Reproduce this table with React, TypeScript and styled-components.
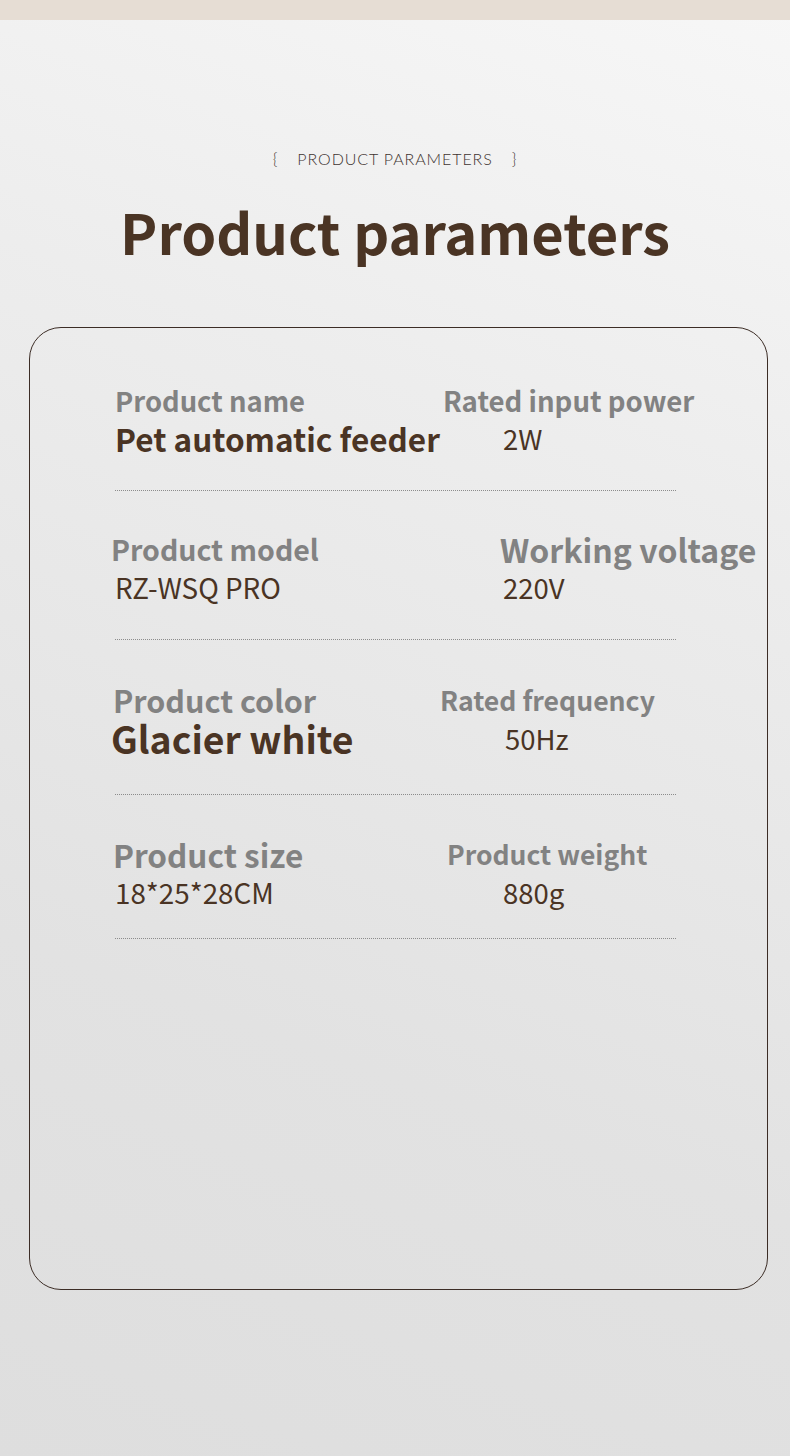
import React from "react"
import styled, { createGlobalStyle } from "styled-components"

const GlobalStyle = createGlobalStyle`
  html, body {
    margin: 0;
    padding: 0;
  }
  body {
    font-family: "Noto Sans CJK SC", "Noto Sans", sans-serif;
  }
`

type Spec = {
  label: string
  value: string
  labelSize: number
  valueSize: number
  valueBold?: boolean
  labelShift: number
  valueShift: number
}

type RowSpec = {
  height: number
  pad: number
  gap: number
  cells: [Spec, Spec]
}

const rows: RowSpec[] = [
  {
    height: 163,
    pad: 53,
    gap: 0,
    cells: [
      { label: "Product name", value: "Pet automatic feeder", labelSize: 27.4, valueSize: 31.5, valueBold: true, labelShift: 0, valueShift: 0 },
      { label: "Rated input power", value: "2W", labelSize: 27.6, valueSize: 27.5, labelShift: 3, valueShift: 63 },
    ],
  },
  {
    height: 149,
    pad: 39,
    gap: -2,
    cells: [
      { label: "Product model", value: "RZ-WSQ PRO", labelSize: 28.5, valueSize: 27.8, labelShift: -4, valueShift: 0 },
      { label: "Working voltage", value: "220V", labelSize: 32, valueSize: 27.5, labelShift: 60, valueShift: 63 },
    ],
  },
  {
    height: 155,
    pad: 41,
    gap: 0,
    cells: [
      { label: "Product color", value: "Glacier white", labelSize: 30.5, valueSize: 37.4, valueBold: true, labelShift: -2, valueShift: -4 },
      { label: "Rated frequency", value: "50Hz", labelSize: 26.6, valueSize: 27.5, labelShift: 0, valueShift: 65 },
    ],
  },
  {
    height: 144,
    pad: 40,
    gap: -3,
    cells: [
      { label: "Product size", value: "18*25*28CM", labelSize: 31.5, valueSize: 27.8, labelShift: -2, valueShift: 0 },
      { label: "Product weight", value: "880g", labelSize: 26.5, valueSize: 27.5, labelShift: 7, valueShift: 63 },
    ],
  },
]

export default function App() {
  return (
    <>
      <GlobalStyle />
      <Page>
        <TopBar />
        <Eyebrow>
          <span>{"{"}</span>
          <span>PRODUCT PARAMETERS</span>
          <span>{"}"}</span>
        </Eyebrow>
        <Title>Product parameters</Title>
        <Card>
          {rows.map((row, i) => (
            <Row key={i} $height={row.height} $pad={row.pad}>
              {row.cells.map((c) => (
                <Cell key={c.label} $gap={row.gap}>
                  <Label $size={c.labelSize} $shift={c.labelShift}>
                    {c.label}
                  </Label>
                  <Value $size={c.valueSize} $shift={c.valueShift} $bold={!!c.valueBold}>
                    {c.value}
                  </Value>
                </Cell>
              ))}
            </Row>
          ))}
        </Card>
      </Page>
    </>
  )
}

const Page = styled.div`
  min-height: 1456px;
  display: flex;
  flex-direction: column;
  background: linear-gradient(200deg, #f7f7f7 0%, #ededed 30%, #e2e2e2 70%, #dedede 100%);
`
const TopBar = styled.div`
  height: 20px;
  background: #e6ddd4;
`
const Eyebrow = styled.div`
  margin-top: 127px;
  display: flex;
  justify-content: center;
  gap: 19px;
  font-family: Lato, "Noto Sans", sans-serif;
  font-weight: 300;
  font-size: 16px;
  line-height: 24px;
  letter-spacing: 0.9px;
  color: #3f3430;
`
const Title = styled.h1`
  margin: 20px 0 0;
  text-align: center;
  font-size: 56px;
  line-height: 80px;
  font-weight: 700;
  color: #4a3424;
`
const Card = styled.section`
  margin: 56px 22px 0 29px;
  height: 963px;
  box-sizing: border-box;
  border: 1px solid #3c2d26;
  border-radius: 32px;
`
const Row = styled.div<{ $height: number; $pad: number }>`
  box-sizing: border-box;
  height: ${(p) => p.$height}px;
  padding-top: ${(p) => p.$pad}px;
  margin: 0 91px 0 85px;
  display: grid;
  grid-template-columns: 325px 1fr;
  border-bottom: 1px dotted #8c8c8c;
`
const Cell = styled.div<{ $gap: number }>`
  display: flex;
  flex-direction: column;
  gap: ${(p) => p.$gap}px;
  white-space: nowrap;
`
const Label = styled.div<{ $size: number; $shift: number }>`
  margin-left: ${(p) => p.$shift}px;
  font-size: ${(p) => p.$size}px;
  line-height: 38px;
  font-weight: 700;
  color: #828282;
`
const Value = styled.div<{ $size: number; $shift: number; $bold: boolean }>`
  margin-left: ${(p) => p.$shift}px;
  font-size: ${(p) => p.$size}px;
  line-height: 38px;
  font-weight: ${(p) => (p.$bold ? 700 : 400)};
  color: #4a3424;
`
